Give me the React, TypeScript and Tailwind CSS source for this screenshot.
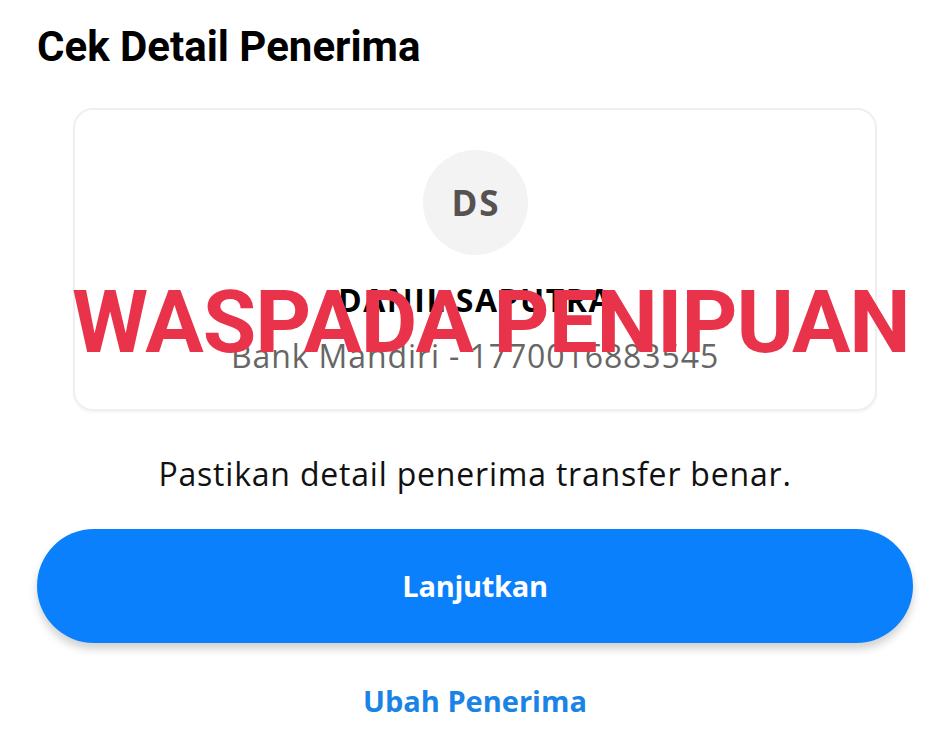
const App = () => {
  return (
    <div className="relative min-h-[739px] w-[950px] bg-white px-[37px] font-['Open_Sans',sans-serif]">
      <h1 className="pt-[22px] font-['Roboto',sans-serif] text-[42px] leading-[50px] font-bold text-black">
        Cek Detail Penerima
      </h1>

      <div className="mx-9 mt-9 flex h-[303px] flex-col items-center rounded-[20px] border-2 border-[#efefef] pt-10 shadow-[0_2px_2px_rgba(0,0,0,0.04)]">
        <div className="flex h-[105px] w-[105px] items-center justify-center rounded-full bg-[#f3f3f3]">
          <span className="pl-[2px] text-[35px] leading-10 font-bold tracking-[2px] text-[#575252]">DS</span>
        </div>
        <p className="mt-[27px] text-[32px] leading-9 font-bold tracking-[1.5px] text-black">
          DANIL SAPUTRA
        </p>
        <p className="mt-[18px] text-[32px] leading-10 tracking-[0.9px] text-[#666666]">
          Bank Mandiri - 1770016883545
        </p>
      </div>

      <p className="mt-[43px] text-center text-[32px] leading-10 tracking-[0.8px] text-[#111111]">
        Pastikan detail penerima transfer benar.
      </p>

      <button className="mt-[35px] flex h-[114px] w-full items-center justify-center rounded-full bg-[#0a80fc] shadow-[0_6px_8px_rgba(0,0,0,0.18)]">
        <span className="text-[29px] font-bold tracking-[-0.3px] text-white">Lanjutkan</span>
      </button>

      <p className="mt-10 text-center text-[29px] leading-9 font-bold text-[#1a83e6]">
        Ubah Penerima
      </p>

      {/* watermark over the card */}
      <div className="pointer-events-none absolute top-[272px] left-[72px] font-['Roboto',sans-serif] text-[87px] leading-[100px] font-bold tracking-[-1px] whitespace-nowrap text-[#e8334a]">
        WASPADA PENIPUAN
      </div>
    </div>
  );
};

export default App;
